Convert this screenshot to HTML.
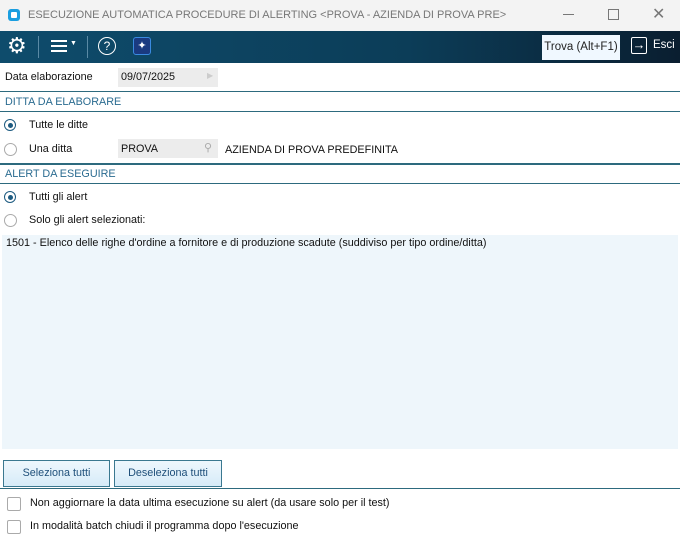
<!DOCTYPE html><html><head><style>
body{margin:0;width:680px;height:540px;background:#fff;font-family:"Liberation Sans",sans-serif;font-size:10.8px;color:#111;position:relative;overflow:hidden}
.a{position:absolute;white-space:nowrap}
.hl{position:absolute;left:0;width:680px;height:1px;background:#2d6a7e}
.rad{position:absolute;width:11px;height:11px;border:1px solid #aaa;border-radius:50%;background:#fff}
.rad.on{border:1.5px solid #1c5a80;width:10px;height:10px}
.rad.on:after{content:"";position:absolute;left:2.5px;top:2.5px;width:5px;height:5px;border-radius:50%;background:#1c5a80}
.chk{position:absolute;width:12px;height:12px;border:1px solid #aaa;border-radius:2px;background:#fff}
.sec{color:#2a6b90}
.btn{position:absolute;top:460px;height:25px;border:1px solid #3a7890;background:linear-gradient(#eef7fd,#d6ebf8);color:#1e4f7a;text-align:center;line-height:25px}
</style></head><body>
<div class="a" style="left:0;top:0;width:680px;height:31px;background:#f3f3f3"></div>
<div class="a" style="left:8px;top:9px;width:12px;height:12px;background:#1a9ee0;border-radius:3px"></div>
<div class="a" style="left:11px;top:12px;width:6px;height:6px;background:#fff;border-radius:1px"></div>
<div class="a" style="left:28px;top:9px;color:#777;font-size:11px">ESECUZIONE AUTOMATICA PROCEDURE DI ALERTING &lt;PROVA - AZIENDA DI PROVA PRE&gt;</div>
<div class="a" style="left:563px;top:14px;width:11px;height:1px;background:#777"></div>
<div class="a" style="left:608px;top:9px;width:9px;height:9px;border:1px solid #777"></div>
<div class="a" style="left:652px;top:4px;color:#777;font-size:16px">✕</div>
<div class="a" style="left:0;top:31px;width:680px;height:32px;background:linear-gradient(90deg,#0e4c6c,#0c3d58 60%,#0a1e30)"></div>
<div class="a" style="left:7px;top:33px;color:#fff;font-size:22px">⚙</div>
<div class="a" style="left:38px;top:36px;width:1px;height:22px;background:#5a8aa5"></div>
<div class="a" style="left:51px;top:40px;width:16px;height:2px;background:#fff;box-shadow:0 5px 0 #fff,0 10px 0 #fff"></div>
<div class="a" style="left:70px;top:40px;color:#fff;font-size:7px">▼</div>
<div class="a" style="left:87px;top:36px;width:1px;height:22px;background:#5a8aa5"></div>
<div class="a" style="left:98px;top:37px;width:16px;height:16px;border:1.5px solid #fff;border-radius:50%;color:#fff;font-size:12px;text-align:center;line-height:16px">?</div>
<div class="a" style="left:133px;top:37px;width:16px;height:16px;background:#1a3a80;border:1.5px solid #3a8ae0;border-radius:3px;color:#fff;font-size:11px;text-align:center;line-height:16px">✦</div>
<div class="a" style="left:542px;top:35px;width:78px;height:25px;background:#f0f8ff;color:#222;font-size:11.5px;line-height:25px;text-align:center">Trova (Alt+F1)</div>
<div class="a" style="left:631px;top:37px;width:14px;height:15px;border:1.5px solid #fff;border-radius:2px;color:#fff;font-size:13px;line-height:14px;text-align:center">→</div>
<div class="a" style="left:653px;top:39px;color:#fff;font-size:11.5px">Esci</div>
<div class="a" style="left:5px;top:71px">Data elaborazione</div>
<div class="a" style="left:118px;top:68px;width:100px;height:19px;background:#ececec"></div>
<div class="a" style="left:121px;top:71px">09/07/2025</div>
<div class="a" style="left:207px;top:71px;color:#ccc;font-size:8px">▶</div>
<div class="hl" style="top:91px"></div>
<div class="a sec" style="left:5px;top:96px">DITTA DA ELABORARE</div>
<div class="hl" style="top:111px"></div>
<div class="rad on" style="left:4px;top:119px"></div>
<div class="a" style="left:29px;top:119px">Tutte le ditte</div>
<div class="rad" style="left:4px;top:143px"></div>
<div class="a" style="left:29px;top:143px">Una ditta</div>
<div class="a" style="left:118px;top:139px;width:100px;height:19px;background:#ececec"></div>
<div class="a" style="left:121px;top:143px">PROVA</div>
<div class="a" style="left:204px;top:141px;color:#aaa;font-size:11px">⚲</div>
<div class="a" style="left:225px;top:144px">AZIENDA DI PROVA PREDEFINITA</div>
<div class="hl" style="top:163px;height:2px"></div>
<div class="a sec" style="left:5px;top:168px">ALERT DA ESEGUIRE</div>
<div class="hl" style="top:183px"></div>
<div class="rad on" style="left:4px;top:191px"></div>
<div class="a" style="left:29px;top:191px">Tutti gli alert</div>
<div class="rad" style="left:4px;top:214px"></div>
<div class="a" style="left:29px;top:214px">Solo gli alert selezionati:</div>
<div class="a" style="left:2px;top:235px;width:676px;height:214px;background:#eef6fb"></div>
<div class="a" style="left:6px;top:237px">1501 - Elenco delle righe d'ordine a fornitore e di produzione scadute (suddiviso per tipo ordine/ditta)</div>
<div class="btn" style="left:3px;width:105px">Seleziona tutti</div>
<div class="btn" style="left:114px;width:106px">Deseleziona tutti</div>
<div class="hl" style="top:488px"></div>
<div class="chk" style="left:7px;top:497px"></div>
<div class="a" style="left:30px;top:497px">Non aggiornare la data ultima esecuzione su alert (da usare solo per il test)</div>
<div class="chk" style="left:7px;top:520px"></div>
<div class="a" style="left:30px;top:520px">In modalità batch chiudi il programma dopo l'esecuzione</div>
</body></html>
